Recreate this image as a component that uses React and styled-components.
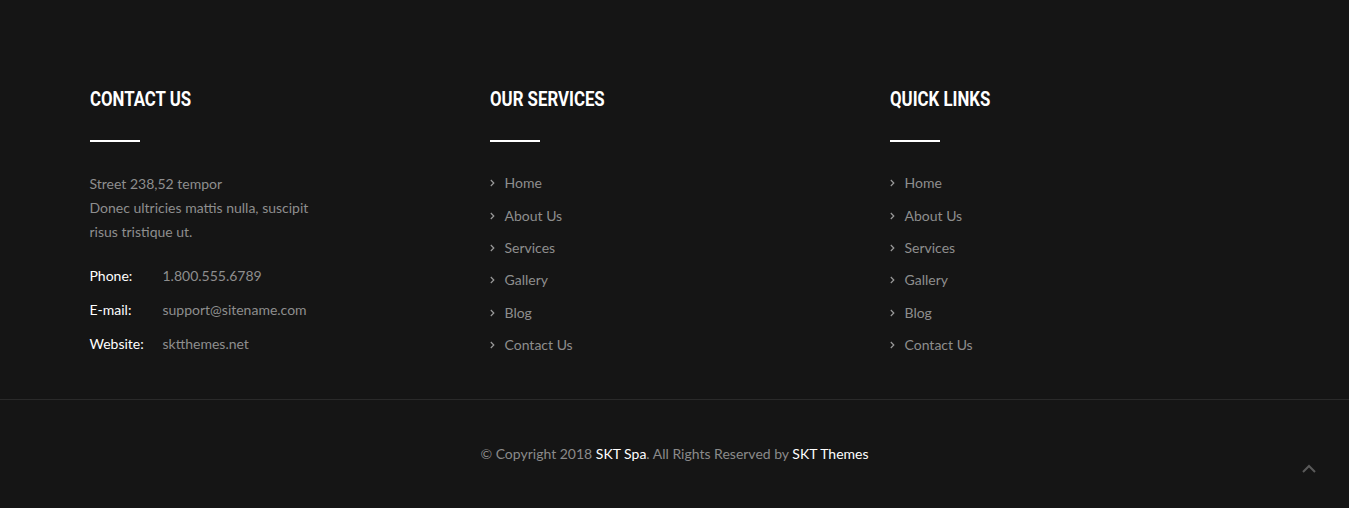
import React from "react";
import styled, { createGlobalStyle } from "styled-components";

const GlobalStyle = createGlobalStyle`
    html, body {
        margin: 0;
        padding: 0;
        background-color: #151515;
    }
    body {
        font-family: "Lato", "Liberation Sans", sans-serif;
    }
`;

const Footer = styled.footer`
    background-color: #151515;
    height: 508px;
    position: relative;
`;

const Container = styled.div`
    width: 1200px;
    margin: 0 auto;
    display: grid;
    grid-template-columns: repeat(3, 400px);
    padding-top: 87px;
    height: 311px;
    box-sizing: border-box;
`;

const Column = styled.div`
    padding: 0 15px;
`;

const Heading = styled.h3`
    margin: 0;
    display: inline-block;
    font-family: "Roboto", sans-serif;
    font-weight: 700;
    font-size: 21px;
    line-height: 24px;
    color: #fff;
    text-transform: uppercase;
    white-space: nowrap;
    transform: scaleX(0.8);
    transform-origin: left center;
`;

const Underline = styled.div`
    width: 50px;
    height: 2px;
    background-color: #fff;
    margin: 29px 0 30px;
`;

const Address = styled.p`
    margin: 0 0 22px;
    color: #8e8e8e;
    font-size: 14px;
    line-height: 24px;
    width: 240px;
`;

const InfoRow = styled.div`
    display: flex;
    font-size: 14px;
    line-height: 20px;
    margin-bottom: 14px;
`;

const InfoLabel = styled.span`
    width: 73px;
    color: #fff;
`;

const InfoValue = styled.span`
    color: #8e8e8e;
`;

const LinkList = styled.ul`
    list-style: none;
    margin: -5px 0 0;
    padding: 0;
`;

const LinkItem = styled.li`
    display: flex;
    align-items: center;
    gap: 10px;
    font-size: 14px;
    line-height: 20px;
    height: 32.4px;
    color: #8e8e8e;
`;

const Chevron = () => (
    <svg width="5" height="8" viewBox="0 0 5 8">
        <path d="M0.8 1 L3.8 4 L0.8 7" fill="none" stroke="#9a9a9a" strokeWidth="1.2" />
    </svg>
);

const BottomBar = styled.div`
    border-top: 1px solid #2a2a2a;
    margin-top: 88px;
    height: 108px;
    display: flex;
    justify-content: center;
    padding-top: 44px;
    box-sizing: border-box;
`;

const Copyright = styled.p`
    margin: 0;
    font-size: 14px;
    line-height: 20px;
    color: #8a8a8a;
`;

const Strong = styled.span`
    color: #fff;
`;

const ScrollTop = styled.a`
    position: absolute;
    right: 30px;
    bottom: 30px;
    width: 20px;
    height: 20px;
    display: flex;
    align-items: center;
    justify-content: center;
`;

const links = ["Home", "About Us", "Services", "Gallery", "Blog", "Contact Us"];

const LinkColumn = ({ title }) => (
    <Column>
        <Heading>{title}</Heading>
        <Underline />
        <LinkList>
            {links.map((l) => (
                <LinkItem key={l}>
                    <Chevron />
                    {l}
                </LinkItem>
            ))}
        </LinkList>
    </Column>
);

export default function App() {
    return (
        <Footer>
            <GlobalStyle />
            <Container>
                <Column>
                    <Heading>Contact Us</Heading>
                    <Underline />
                    <Address>
                        Street 238,52 tempor<br />
                        Donec ultricies mattis nulla, suscipit risus tristique ut.
                    </Address>
                    <InfoRow>
                        <InfoLabel>Phone:</InfoLabel>
                        <InfoValue>1.800.555.6789</InfoValue>
                    </InfoRow>
                    <InfoRow>
                        <InfoLabel>E-mail:</InfoLabel>
                        <InfoValue>support@sitename.com</InfoValue>
                    </InfoRow>
                    <InfoRow>
                        <InfoLabel>Website:</InfoLabel>
                        <InfoValue>sktthemes.net</InfoValue>
                    </InfoRow>
                </Column>
                <LinkColumn title="Our Services" />
                <LinkColumn title="Quick Links" />
            </Container>
            <BottomBar>
                <Copyright>
                    © Copyright 2018 <Strong>SKT Spa</Strong>. All Rights Reserved by <Strong>SKT Themes</Strong>
                </Copyright>
            </BottomBar>
            <ScrollTop>
                <svg width="14" height="9" viewBox="0 0 14 9">
                    <path d="M1 8 L7 2 L13 8" fill="none" stroke="#5a5a5a" strokeWidth="2" />
                </svg>
            </ScrollTop>
        </Footer>
    );
}
